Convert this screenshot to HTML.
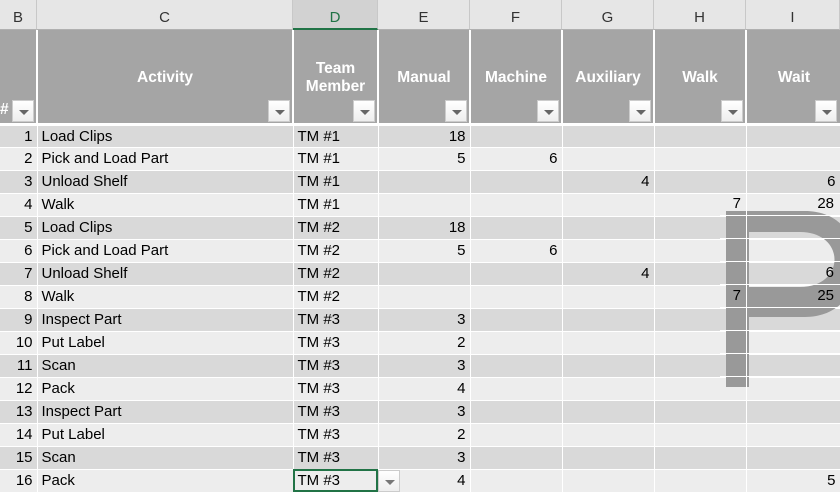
<!DOCTYPE html>
<html><head><meta charset="utf-8"><style>
*{margin:0;padding:0;box-sizing:border-box}
body{width:840px;height:500px;overflow:hidden;background:#fff;font-family:"Liberation Sans",sans-serif;position:relative}
.ch{position:absolute;top:0;height:30px;background:#e6e6e6;border-right:1px solid #c8c8c8;border-bottom:1px solid #b0b0b0;font-size:15px;color:#333;text-align:center;line-height:36px}
.ch.sel{background:#d2d2d2;border-bottom:2px solid #217346;color:#217346}
table{position:absolute;top:30px;left:0;border-collapse:collapse;table-layout:fixed;width:842px}
td{border:1px solid #fff;border-width:0 1px 1px 0;font-size:15px;color:#000;height:23px;padding:0 4px;white-space:nowrap;overflow:hidden}
tr.h td{height:94px;background:#a5a5a5;color:#fff;font-weight:bold;text-align:center;position:relative;border-bottom:3px solid #fff;border-right:2px solid #fff;font-size:15.5px;padding-top:4px}
tr.o td{background:#d9d9d9}
tr.e td{background:#ededed}
.r{text-align:right}
.dd{position:absolute;right:2px;bottom:1px;width:22px;height:22px;background:linear-gradient(#fff,#eee);border:1px solid #ccc}
.dd:after{content:"";position:absolute;left:6px;top:9px;border-left:5px solid transparent;border-right:5px solid transparent;border-top:5px solid #666}
.ln{position:absolute;background:#fff}
.ov{position:absolute;font-size:15px;line-height:23px;text-align:right;width:40px}
</style></head><body>
<div class="ch" style="left:0;width:37px">B</div>
<div class="ch" style="left:37px;width:256px">C</div>
<div class="ch sel" style="left:293px;width:85px">D</div>
<div class="ch" style="left:378px;width:92px">E</div>
<div class="ch" style="left:470px;width:92px">F</div>
<div class="ch" style="left:562px;width:92px">G</div>
<div class="ch" style="left:654px;width:92px">H</div>
<div class="ch" style="left:746px;width:94px">I</div>
<table>
<colgroup><col style="width:37px"><col style="width:256px"><col style="width:85px"><col style="width:92px"><col style="width:92px"><col style="width:92px"><col style="width:92px"><col style="width:96px"></colgroup>
<tr class="h"><td style="text-align:left;vertical-align:bottom;padding:0 0 4px 0">#<div class="dd"></div></td><td>Activity<div class="dd"></div></td><td>Team<br>Member<div class="dd"></div></td><td>Manual<div class="dd"></div></td><td>Machine<div class="dd"></div></td><td>Auxiliary<div class="dd"></div></td><td>Walk<div class="dd"></div></td><td>Wait<div class="dd" style="right:4px"></div></td></tr>
<tr class="o"><td class="r">1</td><td>Load Clips</td><td>TM #1</td><td class="r">18</td><td></td><td></td><td></td><td></td></tr>
<tr class="e"><td class="r">2</td><td>Pick and Load Part</td><td>TM #1</td><td class="r">5</td><td class="r">6</td><td></td><td></td><td></td></tr>
<tr class="o"><td class="r">3</td><td>Unload Shelf</td><td>TM #1</td><td></td><td></td><td class="r">4</td><td></td><td class="r" style="padding-right:6px">6</td></tr>
<tr class="e"><td class="r">4</td><td>Walk</td><td>TM #1</td><td></td><td></td><td></td><td></td><td></td></tr>
<tr class="o"><td class="r">5</td><td>Load Clips</td><td>TM #2</td><td class="r">18</td><td></td><td></td><td></td><td></td></tr>
<tr class="e"><td class="r">6</td><td>Pick and Load Part</td><td>TM #2</td><td class="r">5</td><td class="r">6</td><td></td><td></td><td></td></tr>
<tr class="o"><td class="r">7</td><td>Unload Shelf</td><td>TM #2</td><td></td><td></td><td class="r">4</td><td></td><td></td></tr>
<tr class="e"><td class="r">8</td><td>Walk</td><td>TM #2</td><td></td><td></td><td></td><td></td><td></td></tr>
<tr class="o"><td class="r">9</td><td>Inspect Part</td><td>TM #3</td><td class="r">3</td><td></td><td></td><td></td><td></td></tr>
<tr class="e"><td class="r">10</td><td>Put Label</td><td>TM #3</td><td class="r">2</td><td></td><td></td><td></td><td></td></tr>
<tr class="o"><td class="r">11</td><td>Scan</td><td>TM #3</td><td class="r">3</td><td></td><td></td><td></td><td></td></tr>
<tr class="e"><td class="r">12</td><td>Pack</td><td>TM #3</td><td class="r">4</td><td></td><td></td><td></td><td></td></tr>
<tr class="o"><td class="r">13</td><td>Inspect Part</td><td>TM #3</td><td class="r">3</td><td></td><td></td><td></td><td></td></tr>
<tr class="e"><td class="r">14</td><td>Put Label</td><td>TM #3</td><td class="r">2</td><td></td><td></td><td></td><td></td></tr>
<tr class="o"><td class="r">15</td><td>Scan</td><td>TM #3</td><td class="r">3</td><td></td><td></td><td></td><td></td></tr>
<tr class="e"><td class="r">16</td><td>Pack</td><td style="outline:2px solid #217346;outline-offset:-2px">TM #3</td><td class="r">4</td><td></td><td></td><td></td><td class="r" style="padding-right:6px">5</td></tr>
</table>
<div style="position:absolute;left:378px;top:470px;width:22px;height:22px;background:linear-gradient(#fff,#eee);border:1px solid #ccc"><div style="position:absolute;left:6px;top:9px;border-left:5px solid transparent;border-right:5px solid transparent;border-top:5px solid #777"></div></div>
<svg style="position:absolute;left:0;top:0" width="840" height="500">
<path d="M726 211 H805 C875 211 875 317 805 317 H749 V387 H726 Z M749 232 V287 H800 C846 287 846 232 800 232 Z" fill="#999" fill-rule="evenodd"/>
</svg>
<div class="ln" style="left:746px;top:205px;width:1px;height:190px"></div>
<div class="ln" style="left:720px;top:215px;width:120px;height:1px"></div>
<div class="ln" style="left:720px;top:238px;width:120px;height:1px"></div>
<div class="ln" style="left:720px;top:261px;width:120px;height:1px"></div>
<div class="ln" style="left:720px;top:284px;width:120px;height:1px"></div>
<div class="ln" style="left:720px;top:307px;width:120px;height:1px"></div>
<div class="ln" style="left:720px;top:330px;width:120px;height:1px"></div>
<div class="ln" style="left:720px;top:353px;width:120px;height:1px"></div>
<div class="ln" style="left:720px;top:376px;width:120px;height:1px"></div>
<div class="ov" style="left:701px;top:192px">7</div>
<div class="ov" style="left:794px;top:192px">28</div>
<div class="ov" style="left:794px;top:261px">6</div>
<div class="ov" style="left:701px;top:284px">7</div>
<div class="ov" style="left:794px;top:284px">25</div>
</body></html>
